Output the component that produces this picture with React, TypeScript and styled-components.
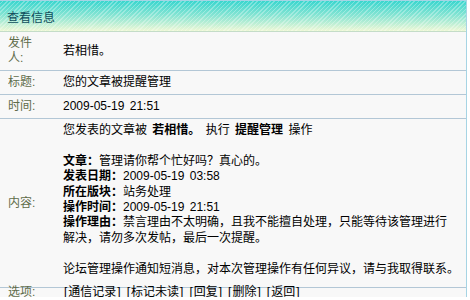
import styled, { createGlobalStyle } from "styled-components";

const GlobalStyle = createGlobalStyle`
    html, body {
        margin: 0;
        padding: 0;
        background: #ffffff;
    }
    body {
        font-family: "Liberation Sans", "Noto Sans CJK SC", sans-serif;
        font-size: 12px;
        word-spacing: 2px;
    }
`;

const Panel = styled.div`
    width: 466px;
    border-top: 1px solid #a6d4e4;
    border-right: 1px solid #a6d4e4;
    background: #f8f8f8;
`;

const Header = styled.div`
    height: 30px;
    display: flex;
    align-items: center;
    padding: 1px 0 0 7px;
    box-sizing: border-box;
    height: 31px;
    color: #0f4d5b;
    font-size: 12px;
    border-bottom: 1px solid #c4dcc8;
    background:
        repeating-linear-gradient(-45deg, rgba(255, 255, 255, 0.3) 0 1px, transparent 1px 3px),
        linear-gradient(to bottom, #38d6ce 0%, #8be5d3 50%, #eef8d6 100%);
`;

const Row = styled.div<{ last?: boolean }>`
    display: grid;
    grid-template-columns: 55px 1fr;
    align-items: center;
    border-bottom: ${({ last }) => (last ? "none" : "1px solid #b3c7d6")};
    line-height: 15px;
`;

const Label = styled.div<{ tight?: boolean }>`
    padding: ${({ tight }) => (tight ? "0 17px 0 8px" : "4px 17px 4px 8px")};
    line-height: ${({ tight }) => (tight ? "9px" : "15px")};
    color: #5f6c4a;
`;

const Value = styled.div<{ tight?: boolean; block?: boolean }>`
    padding: ${({ tight, block }) =>
        tight ? "0 6px 0 8px" : block ? "4px 6px 10px 8px" : "4px 6px 4px 8px"};
    line-height: ${({ tight, block }) => (tight ? "9px" : block ? "15.4px" : "15px")};
    color: #000000;
`;

const Line = styled.div`
    min-height: 15.4px;
    white-space: nowrap;
`;

const B = styled.b`
    font-weight: bold;
`;

const Links = styled.div`
    display: flex;
    gap: 4px;
`;

const Link = styled.a`
    color: #000000;
    text-decoration: none;
    cursor: pointer;
`;

const Bracket = styled.span`
    margin: 0 1px;
`;

const options = ["通信记录", "标记未读", "回复", "删除", "返回"];

const App = () => {
    return (
        <>
            <GlobalStyle />
            <Panel>
                <Header>查看信息</Header>
                <Row>
                    <Label>发件人:</Label>
                    <Value>若相惜。</Value>
                </Row>
                <Row>
                    <Label>标题:</Label>
                    <Value>您的文章被提醒管理</Value>
                </Row>
                <Row>
                    <Label>时间:</Label>
                    <Value>2009-05-19 21:51</Value>
                </Row>
                <Row>
                    <Label>内容:</Label>
                    <Value block>
                        <Line>您发表的文章被 <B>若相惜。</B> 执行 <B>提醒管理</B> 操作</Line>
                        <Line />
                        <Line><B>文章：</B>管理请你帮个忙好吗？真心的。</Line>
                        <Line><B>发表日期：</B>2009-05-19 03:58</Line>
                        <Line><B>所在版块：</B>站务处理</Line>
                        <Line><B>操作时间：</B>2009-05-19 21:51</Line>
                        <Line><B>操作理由：</B>禁言理由不太明确，且我不能擅自处理，只能等待该管理进行</Line>
                        <Line>解决，请勿多次发帖，最后一次提醒。</Line>
                        <Line />
                        <Line>论坛管理操作通知短消息，对本次管理操作有任何异议，请与我取得联系。</Line>
                    </Value>
                </Row>
                <Row last>
                    <Label tight>选项:</Label>
                    <Value tight>
                        <Links>
                            {options.map((o) => (
                                <Link key={o}>
                                    <Bracket>[</Bracket>{o}<Bracket>]</Bracket>
                                </Link>
                            ))}
                        </Links>
                    </Value>
                </Row>
            </Panel>
        </>
    );
};

export default App;
